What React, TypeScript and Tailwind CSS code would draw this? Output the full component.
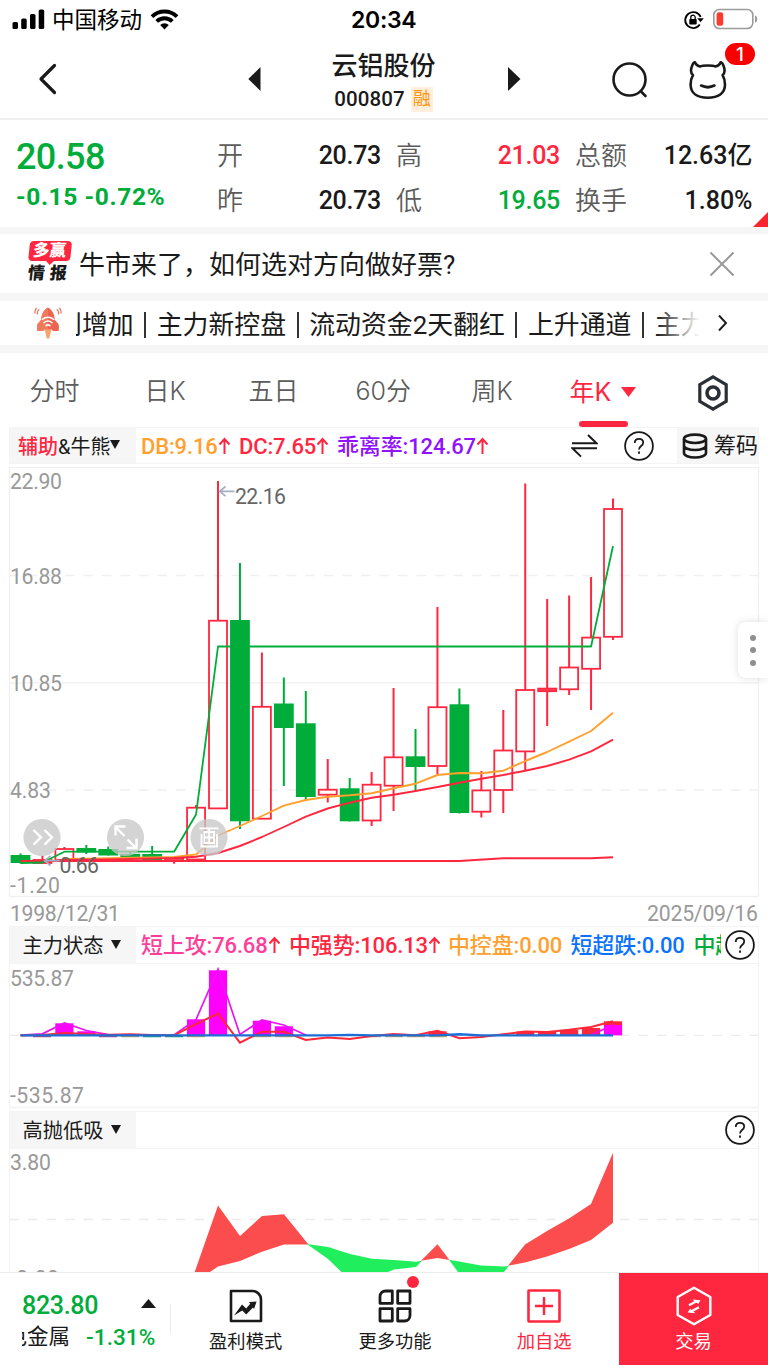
import React from "react";

const RED = "#ff273f";
const GREEN = "#00ac3a";
const NUM = "font-['Roboto','Noto_Sans_CJK_SC',sans-serif]";
const UI = "font-['Inter','Noto_Sans_CJK_SC',sans-serif]";

const cx = (i: number) => 20.5 + i * 21.945;

type Candle = [up: 0 | 1, high: number, top: number, bottom: number, low: number];

const candles: Candle[] = [
  [0, 853.5, 855, 863, 863.5],
  [1, 855.7, 860, 863, 863],
  [1, 847, 849, 860, 860],
  [0, 845, 848, 852.5, 854],
  [0, 846.5, 849, 855.5, 855.5],
  [0, 852, 853.8, 857, 857],
  [0, 846, 854, 860.5, 860.5],
  [1, 857, 858, 861, 863.8],
  [1, 805, 807.7, 859.5, 859.5],
  [1, 481, 620.7, 808.4, 808.4],
  [0, 563, 620, 821.3, 829],
  [1, 652.5, 706.8, 818.7, 818.7],
  [0, 677.5, 703.5, 728, 786],
  [0, 691, 723.3, 797, 800],
  [1, 759, 789.7, 794.7, 802.5],
  [0, 778, 788.3, 821.3, 821.5],
  [1, 772, 784.7, 820.5, 826],
  [1, 688, 757.3, 785.7, 811],
  [0, 729, 756.3, 767, 791],
  [1, 607, 707.2, 766, 774.5],
  [0, 688.5, 704.3, 813, 813.5],
  [1, 771, 790.4, 811.7, 817.5],
  [1, 710, 750.5, 790, 813],
  [1, 483.5, 690, 751.4, 770],
  [1, 599, 688.6, 691.2, 726],
  [1, 595.5, 667.5, 689.3, 695],
  [1, 577, 637.6, 668.8, 710],
  [1, 498.5, 509, 636.8, 640],
];

const line = (from: number, ys: number[]) =>
  ys.map((y, k) => `${cx(from + k).toFixed(1)},${y}`).join(" ");

const orangeLine = line(2, [
  859, 858.6, 858.2, 857.8, 857.4, 857, 854.5, 835.5, 826, 816, 805.7, 800, 796.7, 795.3, 793.3,
  788.3, 783.7, 775, 773, 773.3, 770.7, 761, 752, 741.7, 731, 712.7,
]);
const redLine = line(2, [
  860, 859.7, 859.4, 859, 858.5, 858, 856.8, 853, 846, 837, 827, 816.7, 808.5, 802.7, 797.7, 794.7,
  791, 787, 782.7, 778.7, 775, 770.7, 766, 759.7, 751.3, 739.7,
]);

function Triangle({ className, points, w, h }: { className?: string; points: string; w: number; h: number }) {
  return (
    <svg width={w} height={h} viewBox={`0 0 ${w} ${h}`} className={className}>
      <polygon points={points} fill="currentColor" />
    </svg>
  );
}

function Help() {
  return (
    <svg width="30" height="30" viewBox="0 0 30 30" fill="none" stroke="#1a1a1a" className="shrink-0">
      <circle cx="15" cy="15" r="13.9" strokeWidth="1.8" />
      <path d="M10.8 12v-.4c0-2.3 1.800-3.800 4.200-3.800s4.200 1.500 4.200 3.700c0 1.800-.9 2.600-2.100 3.500-1.400 1.100-2.100 1.800-2.100 3.600" strokeWidth="1.8" />
      <path d="M15 20.6v2.2" strokeWidth="1.9" />
    </svg>
  );
}

function StatusBar() {
  return (
    <div className={`flex h-10 items-center text-black ${UI}`}>
      <svg width="34" height="22" viewBox="0 0 34 22" className="ml-3 shrink-0">
        <rect x="0.5" y="13" width="5.5" height="7" rx="1.6" />
        <rect x="9.2" y="9.5" width="5.5" height="10.5" rx="1.6" />
        <rect x="18" y="5" width="5.5" height="15" rx="1.6" />
        <rect x="26.7" y="0.5" width="5.5" height="19.5" rx="1.6" />
      </svg>
      <span className="ml-1.5 w-[90px] whitespace-nowrap text-[22.5px] leading-none">中国移动</span>
      <svg width="30" height="22" viewBox="0 0 30 22" fill="none" stroke="#000" className="ml-2 shrink-0">
        <path d="M2 7.6a18 18 0 0 1 25 0" strokeWidth="4" />
        <path d="M6.7 12.4a11.2 11.2 0 0 1 15.6 0" strokeWidth="3.8" />
        <path d="M14.5 20.6l-4.3-4.5a6 6 0 0 1 8.6 0z" fill="#000" stroke="none" />
      </svg>
      <span className="ml-[171px] w-[68px] whitespace-nowrap text-[23px] font-semibold leading-none tracking-[-0.3px]">20:34</span>
      <svg width="22" height="20" viewBox="0 0 22 20" fill="none" stroke="#000" className="ml-[264px] shrink-0">
        <path d="M16.8 14.6A8 8 0 1 1 17.6 7" strokeWidth="1.8" />
        <path d="M14.2 8.2h6.6l-3.3 4z" fill="#000" stroke="none" />
        <rect x="6.3" y="9" width="7.4" height="5.6" rx="0.8" fill="#000" stroke="none" />
        <path d="M7.8 9.5V7.4a2.2 2.2 0 0 1 4.4 0v2.1" strokeWidth="1.3" />
      </svg>
      <svg width="47" height="22" viewBox="0 0 47 22" className="ml-[7px] mb-0.5 shrink-0">
        <rect x="1.8" y="1.500" width="39" height="19" rx="5.500" fill="none" stroke="#9b9b9b" strokeWidth="1.600" />
        <rect x="4.600" y="4.200" width="6.600" height="13.600" rx="2.400" fill="#fb3b30" />
        <path d="M43 7.400c3 .8 3 6.400 0 7.200z" fill="#9b9b9b" />
      </svg>
    </div>
  );
}

function NavBar() {
  return (
    <div className="relative flex h-20 items-center border-b-2 border-[#f0f0f0] text-[#1a1a1a]">
      <svg width="20" height="32" viewBox="0 0 20 32" fill="none" stroke="#1a1a1a" strokeWidth="3.2" strokeLinecap="round" strokeLinejoin="round" className="ml-[38px] shrink-0">
        <path d="M16.5 2.5L3 16l13.500 13.500" />
      </svg>
      <Triangle w={13} h={24} points="0.300,12 12.500,0 12.500,24" className="ml-[190px] shrink-0" />
      <div className="ml-[42px] flex w-[161px] flex-col items-center pt-[6px]">
        <div className={`text-[26px] font-medium leading-[34px] ${NUM}`}>云铝股份</div>
        <div className="flex h-[32px] items-center">
          <span className={`text-[20.500px] font-medium leading-none tracking-[0.100px] ${NUM}`}>000807</span>
          <span className={`ml-1.5 flex h-[25px] w-[22px] items-center justify-center bg-[#ffefdc] text-[18px] leading-none text-[#ff9512] ${NUM}`}>融</span>
        </div>
      </div>
      <Triangle w={13} h={24} points="0,0 12.500,12 0,24" className="ml-[44px] shrink-0" />
      <svg width="38" height="38" viewBox="0 0 38 38" fill="none" stroke="#1a1a1a" strokeWidth="2.600" strokeLinecap="round" className="ml-[90px] mt-0.5 shrink-0">
        <circle cx="18.500" cy="18.500" r="16" />
        <path d="M30 30.500l4.500 4.500" />
      </svg>
      <svg width="40" height="40" viewBox="0 0 40 40" fill="none" stroke="#1a1a1a" strokeWidth="2.600" strokeLinecap="round" strokeLinejoin="round" className="ml-[39px] mt-0.5 shrink-0">
        <path d="M12 6.500C10.200 6.200 8 4.500 6.900 2.300C5.200 2 3 7.500 3 10.500C3 12.800 3.800 14 5 15.200C3.300 18 2.600 21 2.600 24.500C2.600 33.500 9.500 37.700 19.800 37.700S37 33.500 37 24.500C37 21 36.200 18 34.600 15.200C35.800 14 36.600 12.800 36.600 10.500C36.600 7.500 34.400 2 32.700 2.300C31.600 4.500 29.400 6.200 27.600 6.500C25 5.100 14.600 5.100 12 6.500Z" />
        <path d="M13.200 25.600c3.800 1.900 9.400 1.900 13.200 0" strokeWidth="2.800" />
      </svg>
      <span className={`absolute left-[725px] top-[3px] flex h-[22px] w-[30px] items-center justify-center rounded-full bg-[#f90000] text-[19px] font-medium leading-none text-white ${UI}`}>1</span>
    </div>
  );
}

function QuoteRow({ label, value, color }: { label: string; value: string; color: string }) {
  return (
    <div className="flex h-[45px] items-center justify-between text-[25px] leading-none">
      <span className="text-[26px] font-[350] text-[#5c5c5c]">{label}</span>
      <span className={`font-medium ${color}`}>{value}</span>
    </div>
  );
}

function Quote() {
  return (
    <div className={`relative flex h-[107px] pt-[13px] ${NUM}`}>
      <div className="ml-4 w-[201px] text-[#00ac3a]">
        <div className="flex h-[47px] items-center text-[36px] font-medium leading-none tracking-[-0.600px]">20.58</div>
        <div className="flex h-[34px] items-center whitespace-nowrap text-[24.500px] font-bold leading-none tracking-[0.600px]">-0.15 -0.72%</div>
      </div>
      <div className="w-[164px] tracking-[-0.300px]">
        <QuoteRow label="开" value="20.73" color="text-[#1a1a1a]" />
        <QuoteRow label="昨" value="20.73" color="text-[#1a1a1a]" />
      </div>
      <div className="ml-[15px] w-[164px] tracking-[-0.300px]">
        <QuoteRow label="高" value="21.03" color="text-[#ff273f]" />
        <QuoteRow label="低" value="19.65" color="text-[#00ac3a]" />
      </div>
      <div className="ml-[15px] w-[177.500px]">
        <QuoteRow label="总额" value="12.63亿" color="text-[#1a1a1a]" />
        <QuoteRow label="换手" value="1.80%" color="text-[#1a1a1a]" />
      </div>
      <Triangle w={15} h={15} points="0,15 15,0 15,15" className="absolute bottom-0 right-0 text-[#f8242f]" />
    </div>
  );
}

function Banner() {
  return (
    <div className={`flex h-[59px] items-center text-[#1a1a1a] ${NUM}`}>
      <div className="mb-[4px] ml-[27px] flex w-[43px] -skew-x-6 flex-col items-center">
        <div className="relative flex h-[20px] w-[42px] items-center justify-center rounded-[4px] bg-[#ff273f] text-[16.500px] font-black leading-none text-white">
          多赢
          <Triangle w={8} h={4} points="0,0 8,0 4,4" className="absolute left-[18px] top-[20px] text-[#ff273f]" />
        </div>
        <div className="mt-[4px] flex h-[17px] w-[39px] items-center justify-between text-[17px] font-black leading-none">
          <span>情</span>
          <span>报</span>
        </div>
      </div>
      <span className="ml-[9px] flex-1 whitespace-nowrap pt-[3px] text-[26px] leading-none">牛市来了，如何选对方向做好票?</span>
      <svg width="26" height="26" viewBox="0 0 26 26" stroke="#999" strokeWidth="2" className="mr-[33px] shrink-0">
        <path d="M1.500 1.500l23 23M24.500 1.500l-23 23" />
      </svg>
    </div>
  );
}

function Rocket() {
  return (
    <svg width="28" height="34" viewBox="0 0 28 34" className="ml-[34px] shrink-0">
      <path d="M10.500 23h7l-2.300 9.500h-2.400z" fill="#f9a468" />
      <path d="M14 1.500C9.500 4 7.600 8 7.300 13.800L3.500 18c-.6 2-.6 4.500 0 7h5.600l1.400-1.700h7l1.400 1.700h5.600c.6-2.500.6-5 0-7l-3.800-4.200C20.400 8 18.500 4 14 1.500z" fill="#ec6450" />
      <path d="M14 1.500C9.500 4 7.600 8 7.300 13.800L3.500 18c-.6 2-.6 4.500 0 7h5.600l1.400-1.700H14z" fill="#f27a5c" />
      <g fill="none" stroke="#fff" strokeWidth="1.500" strokeLinecap="round">
        <path d="M8.500 13.300c3-2.600 8-2.600 11 0M10 16.700c2.400-2 5.600-2 8 0M12 19.700c1.200-1 2.800-1 4 0" />
      </g>
      <g fill="none" stroke="#f0705a" strokeWidth="1.300" strokeLinecap="round">
        <path d="M4.800 3.600C3.600 4.800 3.200 6 3.400 7.800M2.400 2.200C1.200 3.600.8 5 .9 7M23.200 3.600c1.200 1.200 1.600 2.400 1.400 4.200M25.600 2.200c1.200 1.400 1.600 2.800 1.500 4.800" />
      </g>
    </svg>
  );
}

function Ticker() {
  const items = ["主力新控盘", "流动资金2天翻红", "上升通道", "主力"];
  return (
    <div className={`flex h-11 items-center text-[#1a1a1a] ${NUM}`}>
      <Rocket />
      <div className="relative ml-[14px] h-11 w-[624px] overflow-hidden">
        <div className="-ml-[20px] flex h-full items-center whitespace-nowrap pt-[6px] text-[25.900px] leading-none">
          <span>利增加</span>
          {items.map((t) => (
            <React.Fragment key={t}>
              <span className="mx-[10.500px] mb-[3px] h-[26px] w-0.5 shrink-0 bg-[#333]" />
              <span>{t}</span>
            </React.Fragment>
          ))}
        </div>
        <div className="absolute right-0 top-0 h-full w-11 bg-gradient-to-r from-white/0 to-white" />
      </div>
      <svg width="10" height="18" viewBox="0 0 10 18" fill="none" stroke="#1a1a1a" strokeWidth="1.900" className="ml-[18px]">
        <path d="M1 1.500l7 7.500-7 7.500" />
      </svg>
    </div>
  );
}

function Tabs() {
  return (
    <div className={`flex h-[74px] whitespace-nowrap text-[25px] font-[350] leading-none text-[#5c5c5c] ${UI}`}>
      <div className="ml-[29.500px] flex w-[115px] items-center pt-[3px]">分时</div>
      <div className="flex w-[104px] items-center pt-[3px]">日K</div>
      <div className="flex w-[107px] items-center pt-[3px]">五日</div>
      <div className="flex w-[116px] items-center pt-[3px]">60分</div>
      <div className="flex w-[98px] items-center pt-[3px]">周K</div>
      <div className="relative flex w-[68px] items-center pt-[4px] font-normal text-[#ff273f]">
        年K
        <Triangle w={15} h={10} points="0,0 15,0 7.500,10" className="ml-2.5 shrink-0" />
        <span className="absolute bottom-0 left-[9px] h-[6px] w-[49px] rounded-full bg-[#ff273f]" />
      </div>
      <div className="ml-[59.500px] flex items-center">
        <svg width="32" height="38" viewBox="0 0 32 38" fill="none" stroke="#2b2f36" className="mt-[5px]">
          <path d="M16 2.800l13.200 7.900v16.600L16 35.200 2.800 27.300V10.700z" strokeWidth="3.200" />
          <circle cx="16" cy="19" r="6" strokeWidth="3.600" />
        </svg>
      </div>
    </div>
  );
}

function Reading({ text, up, color, className }: { text: string; up?: boolean; color: string; className?: string }) {
  return (
    <span className={`flex shrink-0 items-center tracking-[-0.150px] ${className ?? ""}`}>
      <span className={`pt-0.5 ${color}`}>{text}</span>
      {up && (
        <svg width="13" height="18" viewBox="0 0 13 18" fill="none" stroke={RED} strokeWidth="2" className="shrink-0">
          <path d="M6.500 17V2M1.500 7.500l5-5.500 5 5.500" />
        </svg>
      )}
    </span>
  );
}

function PanelName({ children }: { children: React.ReactNode }) {
  return (
    <div className={`flex h-full w-[126px] shrink-0 items-center whitespace-nowrap bg-[#f6f6f6] leading-none text-[#1a1a1a] ${NUM}`}>
      {children}
    </div>
  );
}

function MainHeader() {
  return (
    <div className={`ml-[9px] flex h-[37px] w-[750px] items-center whitespace-nowrap border border-[#f4f4f4] text-[22px] font-medium leading-none ${NUM}`}>
      <PanelName>
        <span className="ml-[8px] pt-0.5 text-[20px] text-[#ff273f]">辅助</span>
        <span className="pt-0.5 text-[20px] font-normal">&amp;牛熊</span>
        <Triangle w={10} h={9} points="0,0 10,0 5,9" className="-mt-0.5" />
      </PanelName>
      <Reading text="DB:9.16" up color="text-[#ffa02f]" className="ml-[5px] w-[98px]" />
      <Reading text="DC:7.65" up color="text-[#ff273f]" className="w-[98px]" />
      <Reading text="乖离率:124.67" up color="text-[#9013fe]" className="w-[152px]" />
      <svg width="27" height="24" viewBox="0 0 27 24" fill="none" stroke="#1a1a1a" strokeWidth="2" className="ml-[82px] shrink-0">
        <path d="M1 9.300h24.500L17 1M26 14.300H1.500L10 22.600" />
      </svg>
      <div className="ml-[26px]">
        <Help />
      </div>
      <div className="ml-[23px] flex h-full flex-1 items-center bg-[#f6f6f6]">
        <svg width="26" height="26" viewBox="0 0 26 26" fill="none" stroke="#1a1a1a" strokeWidth="2.600" className="ml-[5px] shrink-0">
          <ellipse cx="13" cy="5.800" rx="11" ry="4.200" />
          <path d="M2 6v14c0 2.500 5 4.500 11 4.500s11-2 11-4.500V6M2 12.500c0 2.500 5 4.500 11 4.500s11-2 11-4.500" />
        </svg>
        <span className="ml-[6px] text-[22px] font-normal text-[#1a1a1a]">筹码</span>
      </div>
    </div>
  );
}

function Label({ x, y, w, fill = "#999", children }: { x: number; y: number; w: number; fill?: string; children: string }) {
  return (
    <text x={x} y={y} fontSize="21.200" textLength={w} fill={fill} className="font-['Roboto',sans-serif]">
      {children}
    </text>
  );
}

function MainChart() {
  return (
    <svg width="768" height="462" viewBox="0 464 768 462" className="block">
      <rect x="9.500" y="467.500" width="749" height="429" fill="none" stroke="#f0f0f0" strokeWidth="1.300" />
      <g stroke="#f0f0f0" strokeWidth="1.300">
        <path d="M9.500 575.500H758M9.500 790H758" strokeDasharray="9.500 9" />
        <path d="M9.500 682.800H758" />
      </g>
      <Label x={10} y={489} w={52}>22.90</Label>
      <Label x={10} y={583.500} w={52}>16.88</Label>
      <Label x={10} y={691} w={52}>10.85</Label>
      <Label x={10} y={798} w={41}>4.83</Label>
      <Label x={10} y={893} w={50}>-1.20</Label>
      <Label x={10} y={920.500} w={110}>1998/12/31</Label>
      <Label x={647} y={920.500} w={111}>2025/09/16</Label>

      {candles.map(([up, high, top, bottom, low], i) => {
        const x = cx(i);
        const flat = bottom - top < 4;
        return up ? (
          <g key={i} stroke={RED} strokeWidth="1.800">
            <path d={`M${x} ${high}V${top}M${x} ${bottom}V${low}`} strokeWidth="2" />
            <rect x={x - 9} y={top} width="18" height={bottom - top} fill={flat ? "#ff4a5c" : "none"} />
          </g>
        ) : (
          <g key={i} fill={GREEN}>
            <rect x={x - 1} y={high} width="2" height={low - high} />
            <rect x={x - 9.900} y={top} width="19.800" height={bottom - top} />
          </g>
        );
      })}

      <g fill="none" strokeLinejoin="round">
        <polyline points={`20.500,861 ${cx(20)},861 ${cx(22)},858.200 ${cx(26)},858.200 ${cx(27)},857.300`} stroke={RED} strokeWidth="1.900" />
        <polyline points={orangeLine} stroke="#ffa02f" strokeWidth="1.900" />
        <polyline points={redLine} stroke={RED} strokeWidth="1.900" />
        <polyline points={`20.500,863 ${cx(1)},862.500 ${cx(2)},851.700 ${cx(7)},851.700 ${cx(8)},814.500 ${cx(9)},646.500 ${cx(26)},646.500 ${cx(27)},546`} stroke={GREEN} strokeWidth="1.800" />
      </g>

      <g fill="none" stroke="#a3adc4" strokeWidth="1.700">
        <path d="M234.500 491.300H220M225.500 486.500l-5.800 4.800 5.800 4.800" />
        <path d="M59.500 860.700H45M50.500 855.900l-5.800 4.800 5.800 4.800" />
      </g>
      <Label x={235} y={504} w={51} fill="#666">22.16</Label>
      <Label x={59.500} y={873} w={39.500} fill="#666">0.66</Label>

      <g fill="#c8c8c8" fillOpacity="0.780">
        <circle cx="42" cy="837.500" r="18.600" />
        <circle cx="125.500" cy="837.500" r="18.600" />
        <circle cx="209" cy="837.500" r="18.600" />
      </g>
      <g fill="none" stroke="#fff" strokeWidth="2.400">
        <path d="M33.500 830l7.500 7.300-7.500 7.300M44.500 830l7.500 7.300-7.500 7.300" />
        <path d="M124.500 836l-9-9M115.500 835.500v-9h10M127.500 839.500l8.500 8.500M136.500 838.500v9.500h-10" />
      </g>
      <g fill="none" stroke="#fff" strokeWidth="1.800">
        <path d="M199.500 828.300h19M201.500 834v12.500h15.500V834M204.500 832h9.500v11h-9.500zM204.500 837.500h9.500M209.200 828.500v14.500" />
      </g>
    </svg>
  );
}

function SubHeader({ name, children }: { name: string; children?: React.ReactNode }) {
  return (
    <div className="ml-[9px] flex h-[38px] w-[750px] items-center border border-[#f4f4f4]">
      <PanelName>
        <span className="ml-[12.500px] pt-[3px] text-[20.300px]">{name}</span>
        <Triangle w={10} h={9} points="0,0 10,0 5,9" className="-mt-0.5 ml-[7px]" />
      </PanelName>
      <div className={`flex h-full flex-1 items-center overflow-hidden whitespace-nowrap text-[22px] font-medium leading-none ${NUM}`}>{children}</div>
      <div className="ml-1 mr-[3px]">
        <Help />
      </div>
    </div>
  );
}

const ZERO = 1035.4;
const magentaBars: [number, number][] = [[2, 1023.3], [3, 1031.3], [8, 1019.300], [9, 970.300], [11, 1020.700], [12, 1026.300]];
const redBars: [number, number][] = [[19, 1031.300], [23, 1031.500], [24, 1032], [25, 1030], [26, 1028]];

function StateChart() {
  return (
    <svg width="768" height="147" viewBox="0 964 768 147" className="block">
      <path d="M9.500 964V1107.500H758.500V964" fill="none" stroke="#f4f4f4" strokeWidth="1.300" />
      <path d={`M9.500 ${ZERO}H758`} stroke="#ececec" strokeWidth="1.300" strokeDasharray="9.500 9" />
      <Label x={10} y={985.500} w={64}>535.87</Label>
      <Label x={10} y={1103} w={74}>-535.87</Label>
      <path d="M121 1036.400h18M187 1036.400h18M253 1036.400h18M275 1036.400h18M363 1036.400h18M385 1036.400h18M407 1036.400h18M429 1036.400h18" stroke="#cfa65f" strokeWidth="1.500" />
      <path d="M143 1036.400h18M165 1036.400h18" stroke="#1f9c7a" strokeWidth="1.500" />
      <path d="M33 1036.400h18M99 1036.400h18" stroke="#b0507a" strokeWidth="1.500" />
      {magentaBars.map(([i, y]) => (
        <rect key={i} x={cx(i) - 9.100} y={y} width="18.200" height={ZERO - y} fill="#ff00ff" />
      ))}
      {redBars.map(([i, y]) => (
        <rect key={i} x={cx(i) - 9.100} y={y} width="18.200" height={ZERO - y} fill={RED} />
      ))}
      <rect x={cx(27) - 9.100} y="1021.300" width="18.200" height="4" fill={RED} />
      <rect x={cx(27) - 9.100} y="1025" width="18.200" height="10.400" fill="#ff00ff" />
      <g fill="none" strokeWidth="1.700">
        <polyline stroke="#e815f0" points={line(0, [1035, 1033.800, 1023, 1030.500, 1034.500, 1035, 1035, 1035, 1019.500, 969, 1034.500, 1020, 1025, 1035])} />
        <polyline stroke="#ff00ff" points={line(26, [1035, 1025])} />
        <polyline stroke="#ff2838" strokeWidth="2" points={line(0, [1035.500, 1035, 1033, 1034, 1034.800, 1034.300, 1035, 1035.300, 1024, 1013.500, 1042.700, 1031.700, 1031.700, 1040, 1037.500, 1039, 1036, 1034, 1035.300, 1030.700, 1038.300, 1037, 1034.300, 1031.500, 1032, 1029.800, 1027, 1021.300])} />
        <polyline stroke="#1b6fd6" strokeWidth="2.400" points={line(0, [...Array(14).fill(ZERO), ZERO, 1034.900, ZERO, ZERO, ZERO, ZERO, 1034.300, ZERO, ZERO, ZERO, ZERO, ZERO, ZERO, ZERO])} />
      </g>
    </svg>
  );
}

function SwingChart() {
  return (
    <svg width="768" height="123" viewBox="0 1149 768 123" className="block">
      <path d="M9.500 1149V1280M758.500 1149V1280" stroke="#f4f4f4" strokeWidth="1.300" />
      <path d="M9.500 1219.500H758" stroke="#ececec" strokeWidth="1.300" strokeDasharray="9.500 9" />
      <Label x={10} y={1169.500} w={41}>3.80</Label>
      <Label x={10} y={1286.300} w={49}>-0.00</Label>
      <g fill="#fb4d4d">
        <polygon points="194.700,1272 218,1205.500 240,1236 262,1216 284,1214.300 308.500,1244.500 284,1244.500 262,1251.700 240,1261 218,1266.500 210,1272" />
        <polygon points="421,1260.800 437.500,1244.300 449.500,1260 437.500,1258" />
        <polygon points="508,1265.800 525,1244.500 547,1231 569,1218.500 591,1204 613,1152.700 613,1222.700 591,1240 569,1249 547,1256.500 525,1262.500" />
      </g>
      <g fill="#20ee5c">
        <polygon points="307,1244 328,1247 350,1254 372,1258.700 394,1260 416,1261.800 422,1260.800 416,1267 394,1269.500 388,1272 341.500,1272 328,1259" />
        <polygon points="449,1259.800 459,1261.500 481,1265.500 505,1266.500 509,1265.500 504,1272 458,1272" />
      </g>
    </svg>
  );
}

function Action({ label, color, children }: { label: string; color: string; children: React.ReactNode }) {
  return (
    <div className={`relative flex h-[92px] w-[149.300px] shrink-0 flex-col items-center pt-[13px] ${color}`}>
      <div className="flex h-10 items-center">{children}</div>
      <div className="mt-[5px] text-[18.300px] leading-[22px]">{label}</div>
    </div>
  );
}

function BottomBar() {
  return (
    <div className={`flex h-[94px] border-t border-[#ececec] bg-white ${NUM}`}>
      <div className="relative w-[171px] shrink-0 pl-[22px] pt-[16px] leading-none">
        <div className="flex h-8 items-center text-[#00ac3a]">
          <span className="w-[119px] text-[25px] font-medium tracking-[-0.300px]">823.80</span>
          <Triangle w={15} h={9} points="0,9 15,9 7.500,0" className="-mt-1 text-[#1a1a1a]" />
        </div>
        <div className="flex h-8 items-center">
          <span className="flex h-6 w-[47px] items-center justify-end overflow-hidden whitespace-nowrap text-[21.500px] text-[#1a1a1a]">
            <span className="-mr-[1px]">色金属</span>
          </span>
          <span className="ml-[17px] text-[22.500px] font-medium tracking-[0.100px] text-[#00ac3a]">-1.31%</span>
        </div>
        <span className="absolute right-0 top-[31px] h-[30px] w-px bg-[#ececec]" />
      </div>
      <Action label="盈利模式" color="text-[#1a1a1a]">
        <svg width="34" height="34" viewBox="0 0 34 34" fill="none" stroke="currentColor" strokeWidth="2.600">
          <path d="M2 2h21.500A8.500 8.500 0 0 1 32 10.500V32H2z" strokeLinejoin="round" />
          <path d="M5 26.500l8-11 4.200 4 4.200-5-1.800-1.200 8-.8-2.600 7.500-1-1.600-6.800 7-4-3.900z" fill="currentColor" stroke="none" />
        </svg>
      </Action>
      <Action label="更多功能" color="text-[#1a1a1a]">
        <svg width="34" height="34" viewBox="0 0 34 34" fill="none" stroke="currentColor" strokeWidth="2.800" strokeLinejoin="round">
          <path d="M7.500 2H14.300V14.300H2V7.500A5.500 5.500 0 0 1 7.500 2zM19.700 2H32V14.300H19.700zM2 19.700H14.300V32H2zM19.700 19.700H32V26.500A5.500 5.500 0 0 1 26.500 32H19.700z" />
        </svg>
        <span className="absolute left-[87px] top-[2.500px] size-[12px] rounded-full bg-[#ff273f]" />
      </Action>
      <Action label="加自选" color="text-[#ff273f]">
        <svg width="34" height="34" viewBox="0 0 34 34" fill="none" stroke="currentColor" strokeWidth="2.600">
          <rect x="1.500" y="1.500" width="31" height="31" rx="0.500" />
          <path d="M17 8v18M8 17h18" strokeWidth="2.400" />
        </svg>
      </Action>
      <Action label="交易" color="bg-[#ff273f] text-white">
        <svg width="36" height="40" viewBox="0 0 36 40" fill="none" stroke="#fff" strokeWidth="2.400" strokeLinejoin="round">
          <path d="M18 1.800l16.300 9.200v18L18 38.200 1.700 29V11z" />
          <path d="M13 19.300l8-4.300M23 21.200l-8 4.300" strokeWidth="2.200" />
          <path d="M16.500 13.500l8 .8-2.300 3.700zM19.500 27.200l-7.800-.8 2.300-3.700z" fill="#fff" stroke="none" />
        </svg>
      </Action>
    </div>
  );
}

export default function App() {
  return (
    <div className="relative h-[1366px] w-[768px] overflow-hidden bg-white">
      <StatusBar />
      <NavBar />
      <Quote />
      <div className="h-[7px] bg-[#f6f6f6]" />
      <Banner />
      <div className="h-[8px] bg-[#f6f6f6]" />
      <Ticker />
      <div className="h-[8px] bg-[#f6f6f6]" />
      <Tabs />
      <MainHeader />
      <MainChart />
      <SubHeader name="主力状态">
        <div className="flex pl-[5px]">
          <Reading text="短上攻:76.68" up color="text-[#ff3d9a]" className="w-[148px]" />
          <Reading text="中强势:106.13" up color="text-[#ff273f]" className="w-[159px]" />
          <Reading text="中控盘:0.00" color="text-[#ffa02f]" className="w-[122.500px]" />
          <Reading text="短超跌:0.00" color="text-[#0a72ff]" className="w-[123px]" />
          <Reading text="中超跌:0.00" color="text-[#00ac3a]" />
        </div>
      </SubHeader>
      <StateChart />
      <SubHeader name="高抛低吸" />
      <SwingChart />
      <BottomBar />
      <div className="absolute left-[738px] top-[622px] flex h-[56px] w-[30px] flex-col items-center justify-center gap-[6.500px] rounded-l-lg bg-white shadow-[0_0_8px_rgba(0,0,0,0.130)]">
        <span className="size-[6px] rounded-full bg-[#8f8f8f]" />
        <span className="size-[6px] rounded-full bg-[#8f8f8f]" />
        <span className="size-[6px] rounded-full bg-[#8f8f8f]" />
      </div>
    </div>
  );
}
